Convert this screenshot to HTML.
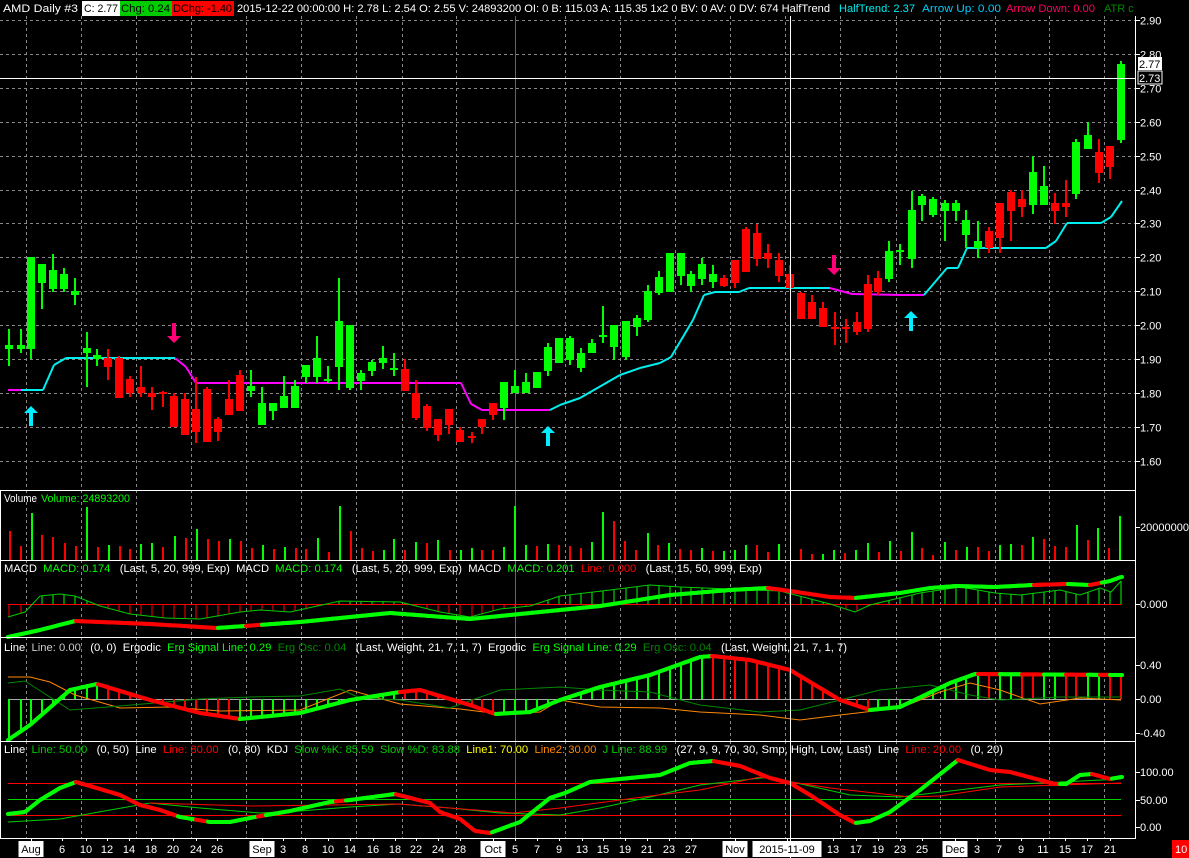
<!DOCTYPE html>
<html><head><meta charset="utf-8"><style>
html,body{margin:0;padding:0;background:#000;width:1189px;height:858px;overflow:hidden}
svg{display:block}
text{font-family:"Liberation Sans",sans-serif;font-size:11px}
</style></head><body>
<svg id="s" width="1189" height="858" xmlns="http://www.w3.org/2000/svg" shape-rendering="crispEdges">
<rect width="1189" height="858" fill="#000"/>
<g id="grid"></g>
<g id="dyn"></g>
<g stroke="#fff" stroke-width="1">
<line x1="0" y1="490.5" x2="1136" y2="490.5"/>
<line x1="0" y1="560.5" x2="1136" y2="560.5"/>
<line x1="0" y1="637.5" x2="1136" y2="637.5"/>
<line x1="0" y1="741.5" x2="1136" y2="741.5"/>
<line x1="0" y1="838.5" x2="1136" y2="838.5"/>
<line x1="1135.5" y1="0" x2="1135.5" y2="839"/>
<line x1="0.5" y1="490" x2="0.5" y2="839"/>
<line x1="790.5" y1="0" x2="790.5" y2="858"/>
<line x1="0" y1="78.5" x2="1136" y2="78.5"/>
</g>
<rect x="0" y="0" width="1136" height="16" fill="#000"/>
<text x="3" y="12" fill="#fff" textLength="75" lengthAdjust="spacingAndGlyphs">AMD  Daily #3</text>
<rect x="82" y="1" width="38" height="15" fill="#fff"/><text x="84" y="12" fill="#000" textLength="34" lengthAdjust="spacingAndGlyphs">C: 2.77</text>
<rect x="120" y="1" width="52" height="15" fill="#0c0"/><text x="121" y="12" fill="#000" textLength="49" lengthAdjust="spacingAndGlyphs">Chg: 0.24</text>
<rect x="172" y="1" width="62" height="15" fill="#f00"/><text x="173" y="12" fill="#000" textLength="59" lengthAdjust="spacingAndGlyphs">DChg: -1.40</text>
<text x="237" y="12" fill="#fff" textLength="593" lengthAdjust="spacingAndGlyphs">2015-12-22 00:00:00 H: 2.78 L: 2.54 O: 2.55 V: 24893200 OI: 0 B: 115.03 A: 115.35 1x2 0 BV: 0 AV: 0 DV: 674 HalfTrend</text>
<text x="839" y="12" fill="#0ee" textLength="76" lengthAdjust="spacingAndGlyphs">HalfTrend: 2.37</text>
<text x="922" y="12" fill="#0cf" textLength="79" lengthAdjust="spacingAndGlyphs">Arrow Up: 0.00</text>
<text x="1006" y="12" fill="#f06" textLength="89" lengthAdjust="spacingAndGlyphs">Arrow Down: 0.00</text>
<text x="1104" y="12" fill="#080">ATR c</text>
<rect x="1136" y="0" width="53" height="858" fill="#000"/>
<text x="4" y="502" fill="#fff" textLength="33" lengthAdjust="spacingAndGlyphs">Volume</text><text x="41" y="502" fill="#0f0" textLength="89" lengthAdjust="spacingAndGlyphs">Volume: 24893200</text>
<text x="4" y="572" xml:space="preserve" textLength="758" lengthAdjust="spacingAndGlyphs"><tspan fill="#fff">MACD  </tspan><tspan fill="#0f0">MACD: 0.174</tspan><tspan fill="#fff">   (Last, 5, 20, 999, Exp)  MACD  </tspan><tspan fill="#0f0">MACD: 0.174</tspan><tspan fill="#fff">   (Last, 5, 20, 999, Exp)  MACD  </tspan><tspan fill="#0f0">MACD: 0.201  </tspan><tspan fill="#f00">Line: 0.000</tspan><tspan fill="#fff">   (Last, 15, 50, 999, Exp)</tspan></text>
<text x="4" y="651" xml:space="preserve" textLength="843" lengthAdjust="spacingAndGlyphs"><tspan fill="#fff">Line  </tspan><tspan fill="#ccc">Line: 0.00</tspan><tspan fill="#fff">   (0, 0)  Ergodic  </tspan><tspan fill="#0f0">Erg Signal Line: 0.29  </tspan><tspan fill="#080">Erg Osc: 0.04</tspan><tspan fill="#fff">   (Last, Weight, 21, 7, 1, 7)  Ergodic  </tspan><tspan fill="#0f0">Erg Signal Line: 0.29  </tspan><tspan fill="#080">Erg Osc: 0.04</tspan><tspan fill="#fff">   (Last, Weight, 21, 7, 1, 7)</tspan></text>
<text x="4" y="753" xml:space="preserve" textLength="999" lengthAdjust="spacingAndGlyphs"><tspan fill="#fff">Line  </tspan><tspan fill="#0c0">Line: 50.00</tspan><tspan fill="#fff">   (0, 50)  Line  </tspan><tspan fill="#f00">Line: 80.00</tspan><tspan fill="#fff">   (0, 80)  KDJ  </tspan><tspan fill="#0c0">Slow %K: 85.59  Slow %D: 83.88  </tspan><tspan fill="#ff0">Line1: 70.00  </tspan><tspan fill="#f80">Line2: 30.00  </tspan><tspan fill="#0c0">J Line: 88.99</tspan><tspan fill="#fff">   (27, 9, 9, 70, 30, Smp, High, Low, Last)  Line  </tspan><tspan fill="#f00">Line: 20.00</tspan><tspan fill="#fff">   (0, 20)</tspan></text>
<g id="axis" fill="#fff"></g>
<rect x="1138" y="57" width="24" height="13" fill="#fff"/><text x="1139" y="68" fill="#000">2.77</text>
<rect x="1138" y="71" width="24" height="13" fill="#000" stroke="#fff"/><text x="1139" y="82" fill="#fff">2.73</text>
<text x="1140" y="531" fill="#fff">20000000</text>
<text x="1140" y="608" fill="#fff">0.000</text>
<text x="1140" y="669" fill="#fff">0.40</text>
<text x="1140" y="703" fill="#fff">0.00</text>
<text x="1140" y="737" fill="#fff">-0.40</text>
<text x="1140" y="776" fill="#fff">100.00</text>
<text x="1140" y="804" fill="#fff">50.00</text>
<text x="1140" y="831" fill="#fff">0.00</text>
<g stroke="#fff"><line x1="1136" y1="527.5" x2="1140" y2="527.5"/><line x1="1136" y1="604.5" x2="1140" y2="604.5"/><line x1="1136" y1="665.5" x2="1140" y2="665.5"/><line x1="1136" y1="699.5" x2="1140" y2="699.5"/><line x1="1136" y1="733.5" x2="1140" y2="733.5"/><line x1="1136" y1="772.5" x2="1140" y2="772.5"/><line x1="1136" y1="800.5" x2="1140" y2="800.5"/><line x1="1136" y1="827.5" x2="1140" y2="827.5"/></g>
<g id="xax"></g>
<rect x="1172" y="840" width="17" height="18" fill="#f00"/><text x="1175" y="853" fill="#fff" font-size="12">10</text>
</svg>
<script>
const NS="http://www.w3.org/2000/svg";
function el(p,t,a,txt){const e=document.createElementNS(NS,t);for(const k in a)e.setAttribute(k,a[k]);if(txt!=null)e.textContent=txt;document.getElementById(p).appendChild(e);return e;}
const gx=[26,81,136,191,246,301,356,402,456,565,620,675,730,785,840,896,940,995,1049,1104];
const panes=[[16,490],[490,560],[560,637],[637,741],[741,838]];
gx.forEach(x=>panes.forEach(p=>el("grid","line",{x1:x+.5,y1:p[0],x2:x+.5,y2:p[1],stroke:"#888","stroke-dasharray":"3,3"})));
el("grid","line",{x1:515.5,y1:16,x2:515.5,y2:838,stroke:"#0a0"});
for(let i=0;i<=13;i++){const y=Math.round(20+i*33.9)+.5;el("grid","line",{x1:0,y1:y,x2:1135,y2:y,stroke:"#888","stroke-dasharray":"3,3"});
 el("axis","text",{x:1140,y:y+4},(2.9-i*0.1).toFixed(2));el("axis","line",{x1:1136,y1:y,x2:1140,y2:y,stroke:"#fff"});}
const ht=[[8,390,"#f0f"],[21,390,"#0ee"],[43,390],[54,365],[66,358],[164,358],[175,358,"#f0f"],[186,367],[196,383],[461,383],[471,404],[482,410],[537,410],[550,410,"#0ee"],[560,405],[580,398],[620,375],[640,368],[660,363],[671,357],[693,320],[704,295],[715,292],[739,292],[749,288],[824,288],[830,288,"#f0f"],[852,294],[902,295],[924,295,"#0ee"],[947,268],[958,268],[967,248],[1046,248],[1056,241],[1067,223],[1101,223],[1111,217],[1122,201]];
let col="#f0f";for(let i=1;i<ht.length;i++){if(ht[i-1][2])col=ht[i-1][2];el("dyn","line",{x1:ht[i-1][0],y1:ht[i-1][1],x2:ht[i][0],y2:ht[i][1],stroke:col,"stroke-width":2,"shape-rendering":"auto"});}
const C=[[8,345,349,329,366,1],[20,345,349,329,353,1],[30,257,349,257,359,1],[41,264,283,264,309,1],[52,270,289,254,292,1],[63,274,289,268,292,1],[74,291,295,278,305,1],[86,348,353,332,387,1],[96,355,359,349,366,1],[107,358,367,349,380,0],[118,358,398,356,398,0],[129,379,393,376,397,0],[140,387,393,366,397,0],[151,393,397,387,410,0],[162,392,394,391,407,0],[173,396,427,393,427,0],[184,399,435,393,435,0],[195,409,432,377,443,0],[206,389,442,387,442,0],[217,419,432,417,441,0],[228,399,415,380,415,0],[239,375,411,370,411,0],[250,386,391,370,397,1],[261,403,425,387,425,1],[272,403,411,403,420,1],[283,396,408,376,408,1],[294,386,408,380,408,1],[305,365,377,365,383,1],[316,358,377,336,383,1],[327,379,381,366,383,1],[338,321,367,278,390,1],[349,325,388,325,390,1],[360,373,381,370,390,1],[371,362,371,360,376,1],[382,358,363,346,369,1],[393,368,370,353,376,1],[404,369,391,359,391,0],[415,393,418,380,420,0],[426,406,428,404,431,0],[437,419,435,419,441,0],[448,409,425,409,434,0],[459,430,442,427,442,0],[471,436,438,432,443,0],[481,419,427,419,434,0],[492,403,415,403,420,0],[503,382,408,382,420,1],[514,386,393,370,393,1],[525,382,393,373,393,1],[536,372,388,372,388,1],[547,347,371,343,376,1],[558,338,363,338,363,1],[569,338,360,336,365,1],[580,353,368,348,372,1],[591,343,353,339,353,1],[602,335,337,306,343,1],[613,325,347,325,360,1],[625,321,357,321,360,1],[636,318,327,315,336,1],[647,291,320,285,322,1],[658,277,293,271,295,1],[669,253,292,253,292,1],[680,253,276,253,285,1],[690,274,286,271,292,1],[701,264,279,258,285,1],[712,274,282,265,288,1],[723,278,286,275,287,0],[734,260,283,260,288,0],[745,229,272,227,272,0],[756,233,259,224,266,0],[767,253,259,244,268,0],[778,260,276,253,282,0],[789,274,288,265,290,0],[800,293,319,292,319,0],[811,302,319,295,319,0],[822,308,327,302,327,0],[834,327,329,312,345,0],[845,327,329,319,343,0],[856,322,332,312,335,0],[867,284,329,275,332,0],[877,278,292,271,295,0],[888,251,279,241,282,1],[899,250,252,244,265,1],[911,210,259,191,268,1],[921,196,205,194,221,1],[932,199,215,197,217,1],[944,203,211,200,241,1],[955,203,211,200,221,1],[965,220,235,210,248,1],[977,241,248,221,258,1],[988,231,248,227,253,0],[999,203,238,203,253,0],[1010,192,211,190,241,0],[1021,199,207,190,217,0],[1032,172,205,156,214,1],[1043,186,205,166,205,1],[1054,203,211,193,224,0],[1065,203,207,180,217,0],[1075,142,194,139,199,1],[1087,135,149,122,149,1],[1098,152,173,139,183,0],[1109,146,167,146,179,0],[1120,64,140,61,143,1]];
C.forEach(c=>{const f=c[5]?"#0f0":"#f00";el("dyn","rect",{x:c[0],y:c[3],width:2,height:Math.max(1,c[4]-c[3]),fill:f});el("dyn","rect",{x:c[0]-3,y:c[1],width:8,height:Math.max(2,c[2]-c[1]),fill:f});});
el("dyn","rect",{x:1117,y:78,width:8,height:1,fill:"#f0f"});
function arrow(x,y,up,c){const d=up?`M${x} ${y} l-7 7 h5 v13 h4 v-13 h5 z`:`M${x} ${y} l-7 -7 h5 v-13 h4 v13 h5 z`;el("dyn","path",{d:d,fill:c,"shape-rendering":"auto"});}
arrow(31,406,1,"#0ef");arrow(174,343,0,"#f07");arrow(548,426,1,"#0ef");arrow(834,275,0,"#f07");arrow(911,311,1,"#0ef");
const V="12r130,27r175,42g75,57r140,72r147,88r165,103r173,118g57,133r177,148g172,163r173,178r183,193g167,208g165,223r177,239g143,254r150,269g123,285r153,300r158,315g153,330r158,345r180,360g170,375r183,390g177,405r180,420r183,436g150,451r192,466g55,481r128,496r180,511r188,526g185,541g153,556r185,571g162,586r165,601g156,617r185,632g185,647g180,662r185,677r185,692g177,707g55,722g170,737r173,752g168,767r170,783r173,798r180,813g162,828g72,843r100,858r158,873r185,889g135,904r170,919g165,934r183,949r185,964g180,979r190,994g188,1009g185,1025g170,1040r170,1055r192,1070g168,1100r183,1115r197,1130g197,1146g185,1161r195,1176g185,1192g165,1207r192,1222g158,1237r188,1252g132,1267r180,1282r200,1298g162,1313r185,1328g177,1343r177,1358r190,1374g170,1389g168,1404r170,1419g147,1434r153,1449r175,1464r177,1479g110,1494r155,1509g120,1524r180,1539g83";
V.split(",").forEach(s=>{const m=s.match(/(\d+)([rg])(\d+)/);const x=Math.round(+m[1]/1.375);const t=Math.round(488+ +m[3]/3);el("dyn","rect",{x:x,y:t,width:2,height:560-t,fill:m[2]=="g"?"#0f0":"#f00"});});
function interp(pts,x){for(let i=1;i<pts.length;i++){if(x<=pts[i][0]){const a=pts[i-1],b=pts[i];return a[1]+(b[1]-a[1])*(x-a[0])/(b[0]-a[0]);}}return pts[pts.length-1][1];}
function poly(pts,c,w){el("dyn","polyline",{points:pts.map(p=>p.join(",")).join(" "),fill:"none",stroke:c,"stroke-width":w,"shape-rendering":"auto"});}
function thick(pts,reds,w){for(let x=8;x<1121;x+=2){const inR=reds.some(r=>x>=r[0]&&x<r[1]);el("dyn","line",{x1:x,y1:interp(pts,x),x2:x+2,y2:interp(pts,x+2),stroke:inR?"#f00":"#0f0","stroke-width":w,"stroke-linecap":"round","shape-rendering":"auto"});}}
const xs=C.map(c=>c[0]+1);
el("dyn","line",{x1:8,y1:604.5,x2:1121,y2:604.5,stroke:"#f00"});
const mThin=[[8,617],[25,612],[40,596],[60,594],[75,596],[100,606],[130,614],[165,618],[200,619],[240,612],[260,610],[290,612],[340,601],[400,602],[440,612],[470,617],[500,609],[530,606],[560,596],[610,590],[650,585],[680,587],[780,591],[830,604],[855,612],[870,605],[920,593],[960,587],[995,593],[1020,595],[1060,590],[1080,595],[1100,588],[1111,592],[1121,581]];
xs.forEach(x=>{const y=interp(mThin,x);el("dyn","line",{x1:x,y1:604,x2:x,y2:y,stroke:y<604?"#0f0":"#f00"});});
poly(mThin,"#0c0",1);
const mThick=[[8,637],[40,630],[75,621],[150,624],[217,628],[300,622],[390,613],[470,619],[560,610],[600,606],[670,595],[730,590],[768,588],[790,591],[830,597],[855,598],[900,593],[930,588],[956,586],[995,587],[1033,585],[1067,584],[1090,585],[1110,581],[1121,577]];
thick(mThick,[[75,217],[245,262],[768,855],[1033,1068],[1090,1102]],4);
el("dyn","line",{x1:8,y1:699.5,x2:1121,y2:699.5,stroke:"#aaa"});
const eThick=[[8,740],[30,725],[70,690],[97,684],[150,700],[200,713],[240,719],[300,713],[350,700],[400,692],[420,690],[470,705],[495,714],[530,712],[560,700],[600,687],[650,675],[700,657],[712,656],[750,660],[790,670],[840,700],[870,710],[900,707],[950,683],[975,674],[1121,675]];
xs.forEach(x=>{const y=interp(eThick,x);const red=(x>97&&x<240)||(x>400&&x<495)||(x>712&&x<870)||(x>978&&((Math.floor((x-978)/22))%2==0));el("dyn","line",{x1:x,y1:699,x2:x,y2:y,stroke:red?"#f00":"#0f0","stroke-width":2});});
poly([[8,677],[30,677],[50,682],[75,695],[120,708],[170,707],[220,711],[300,710],[350,690],[400,704],[460,709],[500,714],[540,712],[560,700],[600,707],[660,708],[700,712],[760,715],[800,720],[840,715],[900,708],[940,692],[970,683],[1000,690],[1040,704],[1080,698],[1121,700]],"#f80",1);
poly([[8,683],[25,681],[70,710],[120,706],[200,699],[250,697],[300,696],[340,689],[360,698],[400,700],[450,708],[500,690],[560,687],[600,690],[650,692],[700,705],[760,712],[800,710],[840,700],[880,690],[930,685],[970,695],[1000,700],[1060,697],[1121,697]],"#080",1);
thick(eThick,[[97,240],[400,495],[712,870],[978,1000],[1022,1044],[1066,1088],[1099,1110]],4);
el("dyn","line",{x1:8,y1:783.5,x2:1121,y2:783.5,stroke:"#f00"});
el("dyn","line",{x1:8,y1:799.5,x2:1121,y2:799.5,stroke:"#0c0"});
el("dyn","line",{x1:8,y1:815.5,x2:1121,y2:815.5,stroke:"#f00"});
poly([[8,822],[60,819],[110,810],[150,803],[200,808],[260,813],[300,811],[350,807],[398,804],[450,808],[500,813],[560,815],[600,808],[650,797],[700,785],[770,777],[850,795],[900,797],[1000,785],[1121,779]],"#0c0",1);
poly([[149,803],[250,806],[398,804],[450,808],[513,813],[560,808],[650,796],[700,790],[760,777],[830,788],[910,797],[940,796],[1000,787],[1121,783]],"#f00",1);
const kThick=[[8,814],[25,812],[40,800],[60,788],[76,782],[100,789],[120,795],[140,805],[160,810],[180,817],[210,822],[230,822],[255,817],[290,811],[330,802],[350,800],[395,794],[430,803],[440,812],[460,819],[475,831],[490,833],[520,822],[550,798],[565,793],[590,782],[620,779],[660,775],[690,763],[713,761],[740,766],[770,778],[790,783],[810,795],[840,815],[855,823],[870,821],[890,812],[920,790],[958,760],[990,770],[1010,772],[1040,780],[1055,784],[1066,784],[1080,775],[1092,774],[1110,779],[1121,777]];
thick(kThick,[[76,178],[195,208],[258,266],[335,345],[395,492],[713,855],[958,1060],[1092,1112]],4);
const XL=[["Aug",31,1],["6",62],["10",86],["12",107],["14",129],["18",151],["20",173],["24",196],["26",217],["Sep",262,1],["3",283],["8",305],["10",328],["14",350],["16",373],["18",395],["22",416],["24",438],["28",460],["Oct",493,1],["5",515],["7",537],["9",559],["13",582],["15",603],["19",625],["21",647],["23",669],["27",691],["Nov",735,1],["2015-11-09",787,1],["13",833],["17",856],["19",878],["23",900],["25",922],["Dec",955,1],["3",977],["7",999],["9",1021],["11",1043],["15",1065],["17",1087],["21",1110]];
XL.forEach(l=>{const w=l[0].length*6.3+6;if(l[2]){el("xax","rect",{x:l[1]-w/2,y:841,width:w,height:16,fill:"#fff"});}
 el("xax","text",{x:l[1],y:853,"text-anchor":"middle",fill:l[2]?"#000":"#fff","font-size":"12"},l[0]);
 el("xax","line",{x1:l[1]+.5,y1:838,x2:l[1]+.5,y2:841,stroke:"#fff"});});
</script>
</body></html>
